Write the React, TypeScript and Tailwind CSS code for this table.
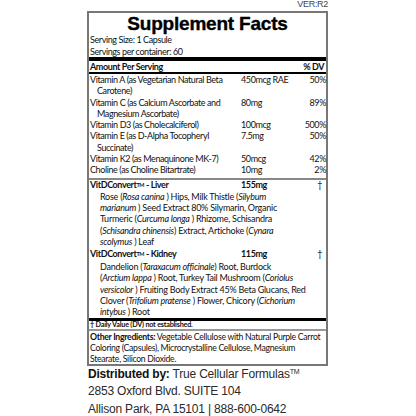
import React from "react";

const T = "font-['Lato','Open_Sans',sans-serif] text-[9px] tracking-[-0.4px] text-[#111]";

const vitamins: { lines: string[]; amt: string; dv: string }[] = [
  { lines: ["Vitamin A (as Vegetarian Natural Beta", "Carotene)"], amt: "450mcg RAE", dv: "50%" },
  { lines: ["Vitamin C (as Calcium Ascorbate and", "Magnesium Ascorbate)"], amt: "80mg", dv: "89%" },
  { lines: ["Vitamin D3 (as Cholecalciferol)"], amt: "100mcg", dv: "500%" },
  { lines: ["Vitamin E (as D-Alpha Tocopheryl", "Succinate)"], amt: "7.5mg", dv: "50%" },
  { lines: ["Vitamin K2 (as Menaquinone MK-7)"], amt: "50mcg", dv: "42%" },
  { lines: ["Choline (as Choline Bitartrate)"], amt: "10mg", dv: "2%" },
];

function Blend({
  name,
  amt,
  lines,
  headClass,
}: {
  name: string;
  amt: string;
  lines: React.ReactNode[];
  headClass: string;
}) {
  return (
    <div>
      <div className={"grid grid-cols-[151px_1fr_auto] items-start leading-[10px] font-bold " + headClass}>
        <div className="whitespace-nowrap">
          VitDConvert<sup className="text-[5.5px] relative top-[-1px]">TM</sup> - {name}
        </div>
        <div>{amt}</div>
        <div className="pr-[4px] font-normal">†</div>
      </div>
      <div className="pl-[10px] leading-[11.3px] tracking-[-0.25px]">
        {lines.map((l, i) => (
          <div key={i} className="whitespace-nowrap">{l}</div>
        ))}
      </div>
    </div>
  );
}

export default function App() {
  return (
    <div className="w-[416px] h-[416px] bg-white overflow-hidden">
      <div className="h-[11px] pr-[88px] text-right font-['Liberation_Sans',Arial,sans-serif] text-[9px] leading-[9px] text-[#444] tracking-[-0.3px]">
        VER:R2
      </div>
      <div className="ml-[87px] w-[241px] border-2 border-[#777]">
        <div className="pl-[1px] pr-[1px]">
          <div className="h-[21px] text-center font-['Liberation_Sans',Arial,sans-serif] font-bold text-[19px] leading-[21px] tracking-[-0.2px] text-black [-webkit-text-stroke:0.35px_black]">
            Supplement Facts
          </div>
          <div className={T + " leading-[11.5px]"}>
            <div>Serving Size: 1 Capsule</div>
            <div>Servings per container: 60</div>
          </div>
        </div>
        <div className="h-[4px] bg-black" />
        <div className={T + " pl-[1px] pr-[1px]"}>
          <div className="flex justify-between h-[11px] leading-[11px] font-bold pr-[1px]">
            <span>Amount Per Serving</span>
            <span>% DV</span>
          </div>
        </div>
        <div className="h-[2px] bg-black" />
        <div className={T + " pl-[1px]"}>
          {vitamins.map((v, i) => (
            <div key={i} className="grid grid-cols-[151px_1fr_auto] leading-[11.3px]">
              <div>
                {v.lines.map((l, j) => (
                  <div key={j} className={"whitespace-nowrap " + (j > 0 ? "pl-[7px]" : "")}>{l}</div>
                ))}
              </div>
              <div className="whitespace-nowrap">{v.amt}</div>
              <div className="text-right">{v.dv}</div>
            </div>
          ))}
        </div>
        <div className="mt-[2px] h-[2px] bg-[#888]" />
        <div className={T + " pl-[1px]"}>
          <Blend
            name="Liver"
            amt="155mg"
            headClass="h-[11px]"
            lines={[
              <>Rose (<i>Rosa canina</i> ) Hips, Milk Thistle (<i>Silybum</i></>,
              <><i>marianum</i> ) Seed Extract 80% Silymarin, Organic</>,
              <>Turmeric (<i>Curcuma longa</i> ) Rhizome, Schisandra</>,
              <>(<i>Schisandra chinensis</i>) Extract, Artichoke (<i>Cynara</i></>,
              <><i>scolymus</i> ) Leaf</>,
            ]}
          />
          <div className="h-[2px]" />
          <Blend
            name="Kidney"
            amt="115mg"
            headClass="h-[12px]"
            lines={[
              <>Dandelion (<i>Taraxacum officinale</i>) Root, Burdock</>,
              <>(<i>Arctium lappa</i> ) Root, Turkey Tail Mushroom (<i>Coriolus</i></>,
              <><i>versicolor</i> ) Fruiting Body Extract 45% Beta Glucans, Red</>,
              <>Clover (<i>Trifolium pratense</i> ) Flower, Chicory (<i>Cichorium</i></>,
              <><i>intybus</i> ) Root</>,
            ]}
          />
        </div>
        <div className="h-[3px] bg-black" />
        <div className="h-[8px] pl-[1px] font-['Lato',sans-serif] font-bold text-[7.2px] leading-[8px] tracking-[-0.2px] text-[#111] whitespace-nowrap">
          † Daily Value (DV) not established.
        </div>
        <div className="h-[2px] bg-[#999]" />
        <div className="pl-[1px] font-['Lato','Open_Sans',sans-serif] text-[8.7px] tracking-[-0.3px] text-[#111] leading-[11px]">
          <div className="whitespace-nowrap"><b>Other Ingredients:</b> Vegetable Cellulose with Natural Purple Carrot</div>
          <div className="whitespace-nowrap">Coloring (Capsules), Microcrystalline Cellulose, Magnesium</div>
          <div className="whitespace-nowrap">Stearate, Silicon Dioxide.</div>
        </div>
      </div>
      <div className="ml-[88px] font-['Liberation_Sans',Arial,sans-serif] text-[12px] leading-[17.5px] tracking-[-0.2px] text-[#2a2a2a]">
        <div className="whitespace-nowrap">
          <b className="text-[#111]">Distributed by:</b> True Cellular Formulas<sup className="text-[7px]">TM</sup>
        </div>
        <div>2853 Oxford Blvd. SUITE 104</div>
        <div>Allison Park, PA 15101 | 888-600-0642</div>
      </div>
    </div>
  );
}
